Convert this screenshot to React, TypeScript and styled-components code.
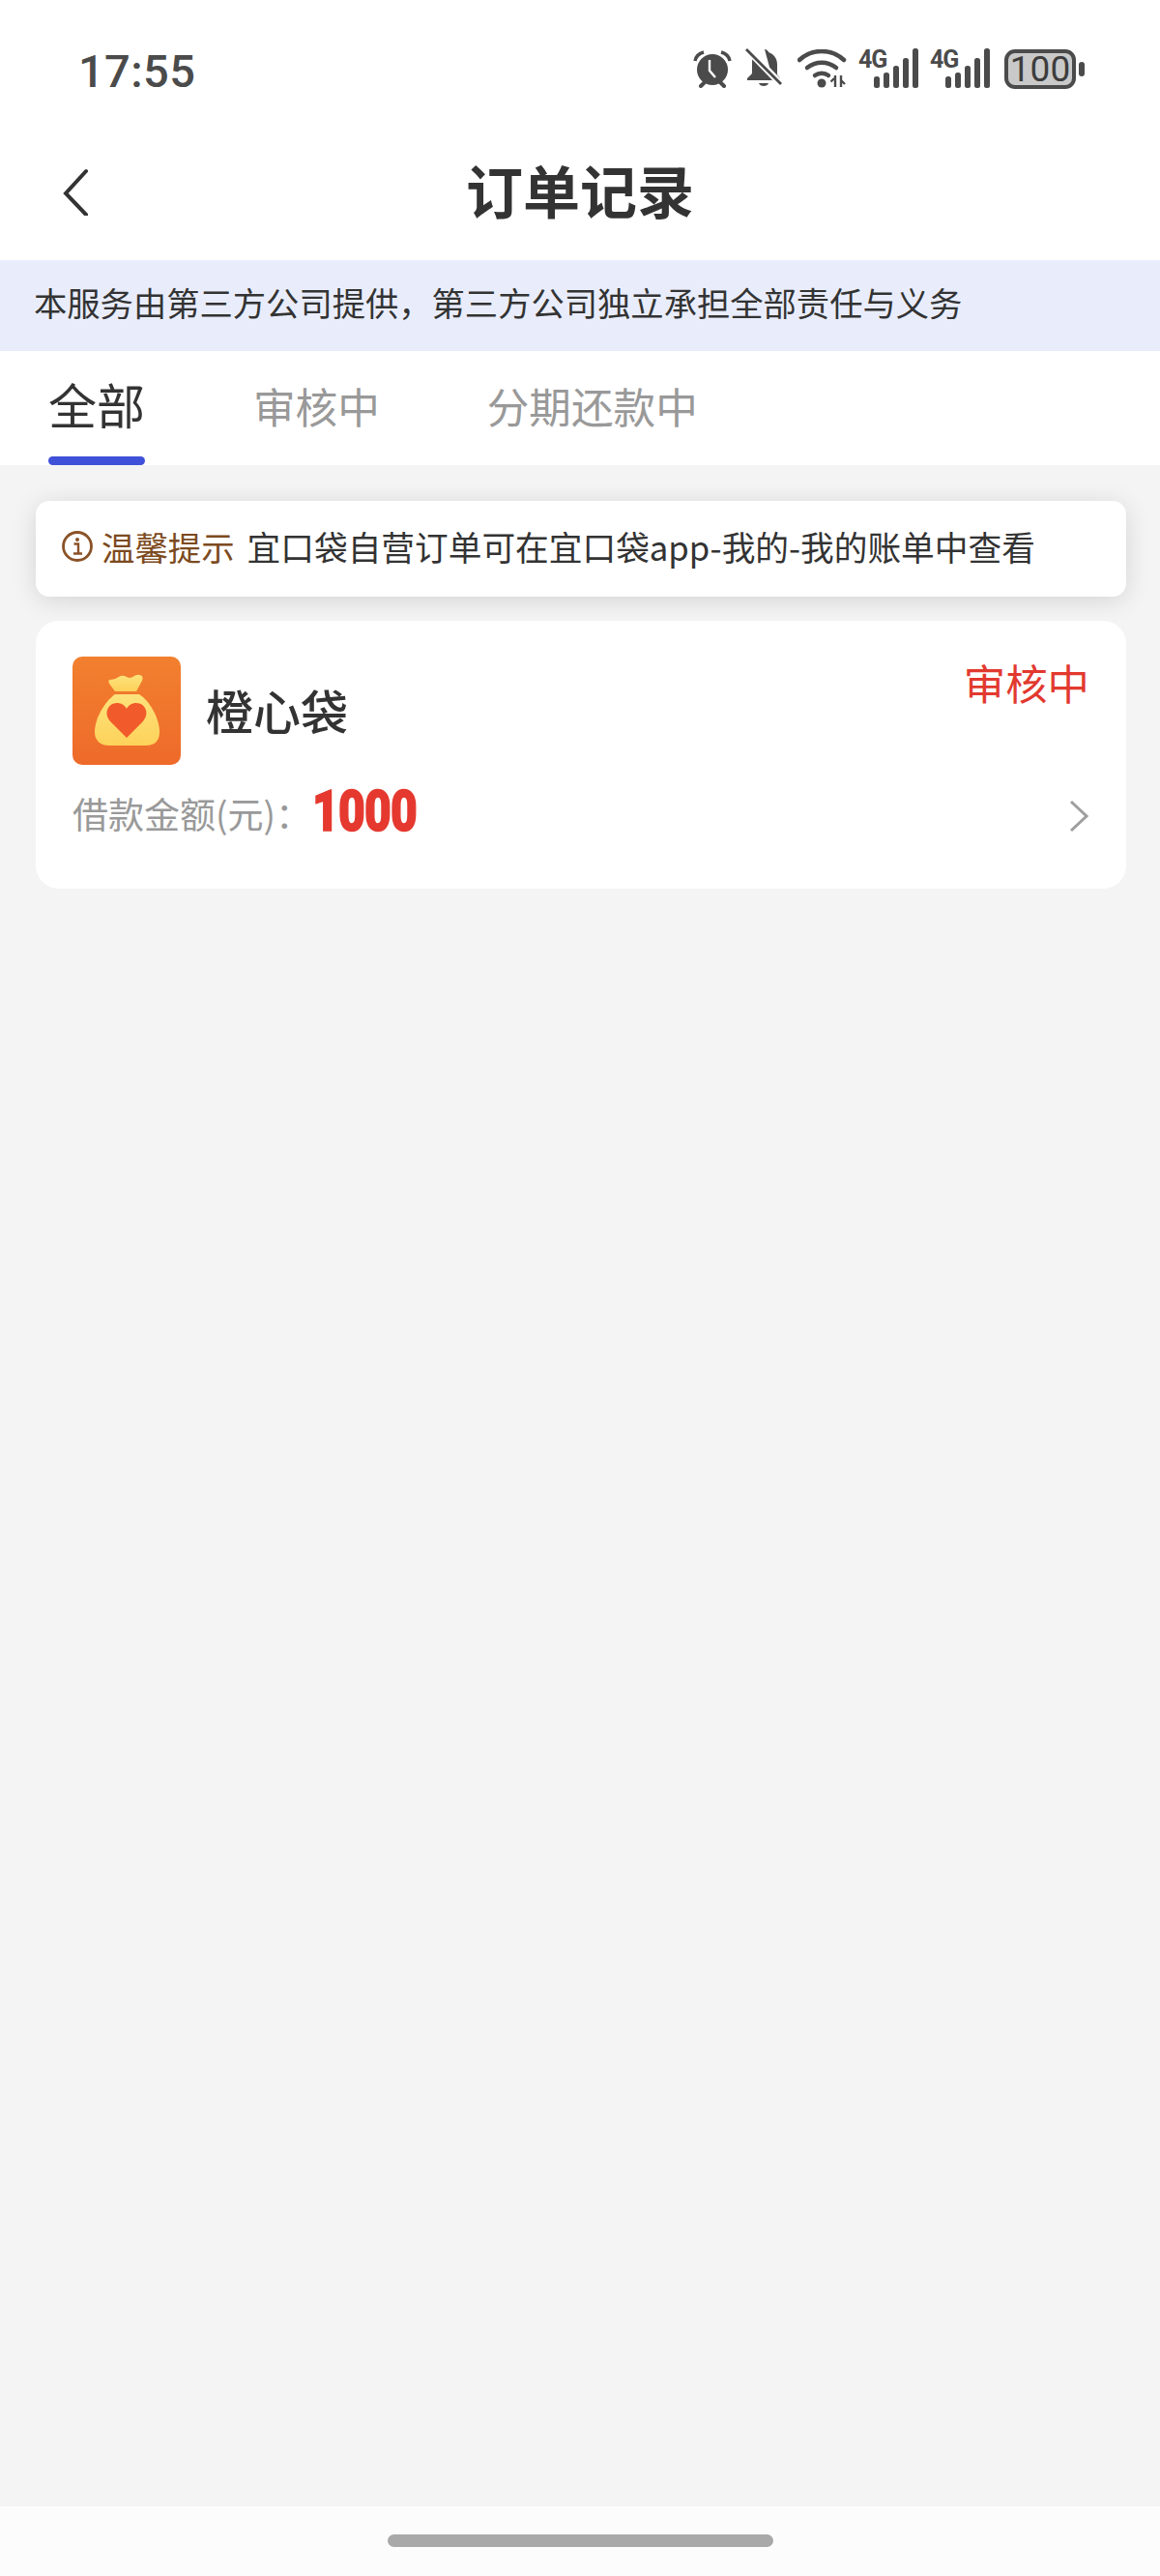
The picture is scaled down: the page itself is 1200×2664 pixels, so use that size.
import React from 'react';
import styled, { createGlobalStyle } from 'styled-components';

const GlobalStyle = createGlobalStyle`
    html, body {
        margin: 0;
        padding: 0;
        background: #f4f4f4;
    }
    * {
        box-sizing: border-box;
    }
`;

const FONT = `"Noto Sans CJK SC", "Noto Sans", sans-serif`;

const Page = styled.div`
    width: 1200px;
    height: 2664px;
    display: flex;
    flex-direction: column;
    background: #f4f4f4;
    font-family: ${FONT};
    overflow: hidden;
`;

const StatusBar = styled.div`
    height: 134px;
    flex: none;
    display: flex;
    align-items: flex-start;
    justify-content: space-between;
    padding: 50px 87px 0 81px;
    background: #fff;
`;

const Clock = styled.span`
    font-family: Roboto, sans-serif;
    font-size: 47px;
    line-height: 47px;
    font-weight: 500;
    letter-spacing: 0.4px;
    color: #4b4b4b;
`;

const StatusIcons = styled.div`
    display: flex;
    align-items: center;
`;

const NavBar = styled.div`
    height: 135px;
    flex: none;
    position: relative;
    display: flex;
    align-items: center;
    justify-content: center;
    padding-bottom: 12px;
    background: #fff;
`;

const BackButton = styled.svg`
    position: absolute;
    left: 62px;
    top: 39px;
`;

const Title = styled.h1`
    margin: 0;
    font-size: 59px;
    line-height: 64px;
    font-weight: 700;
    color: #333;
`;

const Notice = styled.div`
    height: 94px;
    flex: none;
    display: flex;
    align-items: center;
    padding: 0 0 8px 35px;
    background: #e9edfb;
    font-size: 34.3px;
    color: #333;
`;

const Tabs = styled.div`
    height: 118px;
    flex: none;
    display: flex;
    background: #fff;
    padding-left: 50px;
`;

const Tab = styled.div<{ $active?: boolean; $gap: number }>`
    position: relative;
    margin-right: ${({ $gap }) => $gap}px;
    padding-top: ${({ $active }) => ($active ? 25 : 27)}px;
    font-size: ${({ $active }) => ($active ? 50 : 43.6)}px;
    line-height: 58px;
    color: ${({ $active }) => ($active ? '#333' : '#999')};

    ${({ $active }) =>
        $active &&
        `&::after {
            content: '';
            position: absolute;
            left: 0;
            right: 0;
            bottom: 0;
            height: 9px;
            border-radius: 5px;
            background: #3f51d8;
        }`}
`;

const Content = styled.div`
    flex: 1;
    display: flex;
    flex-direction: column;
    gap: 25px;
    padding: 37px 35px 0 37px;
`;

const TipCard = styled.div`
    height: 99px;
    display: flex;
    align-items: center;
    padding: 0 0 6px 26px;
    background: #fff;
    border-radius: 14px;
    box-shadow: 0 4px 26px rgba(0, 0, 0, 0.13);
`;

const TipLabel = styled.span`
    margin-left: 8px;
    font-size: 34.4px;
    color: #7c4a20;
`;

const TipText = styled.span`
    margin-left: 13px;
    font-size: 34.7px;
    color: #333;
`;

const OrderCard = styled.div`
    height: 277px;
    position: relative;
    padding: 37px 38px 0;
    background: #fff;
    border-radius: 24px;
`;

const OrderHead = styled.div`
    display: flex;
    align-items: center;
    gap: 26px;
`;

const AppName = styled.span`
    font-size: 49px;
    line-height: 60px;
    font-weight: 500;
    color: #333;
    margin-top: -2px;
`;

const OrderStatus = styled.span`
    position: absolute;
    top: 36px;
    right: 38px;
    font-size: 43.4px;
    line-height: 54px;
    color: #e2392f;
`;

const AmountRow = styled.div`
    display: flex;
    align-items: center;
    margin-top: 19px;
    height: 62px;
`;

const AmountLabel = styled.span`
    font-size: 37px;
    color: #999;
`;

const AmountValue = styled.span`
    display: inline-block;
    margin-left: 1px;
    margin-top: -4px;
    font-family: Roboto, sans-serif;
    font-size: 60px;
    line-height: 62px;
    font-weight: 900;
    letter-spacing: -1px;
    color: #e5392f;
    -webkit-text-stroke: 1.5px #e5392f;
    transform: scaleX(0.8);
    transform-origin: left center;
`;

const Chevron = styled.svg`
    position: absolute;
    right: 37px;
    top: 184px;
`;

const HomeBar = styled.div`
    height: 72px;
    flex: none;
    display: flex;
    justify-content: center;
    padding-top: 29px;
    background: #fcfcfc;
`;

const HomeHandle = styled.div`
    width: 399px;
    height: 13px;
    border-radius: 7px;
    background: #a9a9a9;
`;

const Battery = styled.div`
    position: relative;
    width: 74px;
    height: 41px;
    margin-left: 15px;
    display: flex;
    align-items: center;
    justify-content: center;
    border: 4px solid #4b4b4b;
    border-radius: 11px;
    background: #c9c9c9;
    font-family: Roboto, sans-serif;
    font-size: 37px;
    line-height: 33px;
    color: #3c3c3c;

    &::after {
        content: '';
        position: absolute;
        right: -13px;
        top: 9px;
        width: 6px;
        height: 15px;
        border-radius: 3px;
        background: #4b4b4b;
    }
`;

const AlarmIcon = () => (
    <svg width="42" height="40" viewBox="0 0 40 40">
        <circle cx="20" cy="21" r="16" fill="#4b4b4b" />
        <path d="M17 11v11l6 7" stroke="#fff" strokeWidth="2.4" fill="none" />
        <path d="M2 12 C3 7 7 4 11 3" stroke="#4b4b4b" strokeWidth="3.5" fill="none" />
        <path d="M38 12 C37 7 33 4 29 3" stroke="#4b4b4b" strokeWidth="3.5" fill="none" />
        <path d="M8 38l4-4M32 38l-4-4" stroke="#4b4b4b" strokeWidth="4" strokeLinecap="round" />
    </svg>
);

const BellOffIcon = () => (
    <svg width="40" height="42" viewBox="0 0 40 42" style={{ marginLeft: 12 }}>
        <path
            d="M21 1c2 0 4 2 4 3 6 2 9 7 9 13v10l3 4v2H3v-2l5-5V14c0-2 .5-4 1.5-5.500L30 34z"
            fill="#4b4b4b"
        />
        <path d="M15 36h10c-1 4-9 4-10 0z" fill="#4b4b4b" />
        <path d="M3 1l35 36" stroke="#fff" strokeWidth="7" />
        <path d="M2 1l36 36" stroke="#4b4b4b" strokeWidth="2.8" />
    </svg>
);

const WifiIcon = () => (
    <svg width="52" height="40" viewBox="0 0 52 40" style={{ marginLeft: 15 }}>
        <path d="M2 11C15-1 35-1 48 11" stroke="#4b4b4b" strokeWidth="4.500" fill="none" strokeLinecap="round" />
        <path d="M10 19c9-7 21-7 30 0" stroke="#4b4b4b" strokeWidth="4.500" fill="none" strokeLinecap="round" />
        <path d="M18 27c4-3 10-3 14 0" stroke="#4b4b4b" strokeWidth="4.500" fill="none" strokeLinecap="round" />
        <circle cx="25" cy="35" r="4.500" fill="#4b4b4b" />
        <path d="M38 30l-3.500 3.500M39 27v12" stroke="#4b4b4b" strokeWidth="2.400" fill="none" />
        <path d="M49 36l-3.500-3.500M45 39V27" stroke="#4b4b4b" strokeWidth="2.400" fill="none" />
    </svg>
);

const SignalWrap = styled.div<{ $gap: number }>`
    position: relative;
    width: 62px;
    height: 42px;
    margin-left: ${({ $gap }) => $gap}px;
    display: flex;
    justify-content: flex-end;

    svg {
        overflow: visible;
        margin-right: 3px;
    }
`;

const NetLabel = styled.span`
    position: absolute;
    left: 0;
    top: 0;
    font-family: Roboto, sans-serif;
    font-size: 25px;
    line-height: 24px;
    font-weight: 700;
    letter-spacing: -1px;
    color: #4b4b4b;
`;

const SignalIcon = ({ gap }: { gap: number }) => (
    <SignalWrap $gap={gap}>
        <NetLabel>4G</NetLabel>
        <svg width="48" height="42" viewBox="0 0 48 42">
            <rect x="5" y="29" width="6" height="12" rx="2.500" fill="#4b4b4b" />
            <rect x="15" y="25" width="6" height="16" rx="2.500" fill="#4b4b4b" />
            <rect x="25" y="18" width="6" height="23" rx="2.500" fill="#4b4b4b" />
            <rect x="35" y="10" width="6" height="31" rx="2.500" fill="#4b4b4b" />
            <rect x="45" y="0" width="6" height="41" rx="2.500" fill="#4b4b4b" />
        </svg>
    </SignalWrap>
);

const InfoIcon = () => (
    <svg width="34" height="34" viewBox="0 0 34 34">
        <circle cx="17" cy="17" r="14.500" stroke="#8a5227" strokeWidth="2.800" fill="none" />
        <circle cx="17" cy="10" r="2" fill="#8a5227" />
        <path d="M13.500 14.500H18V24M13 24.500h9" stroke="#8a5227" strokeWidth="2.400" fill="none" />
    </svg>
);

const BagLogo = () => (
    <svg width="112" height="112" viewBox="0 0 112 112">
        <defs>
            <linearGradient id="bagBg" x1="0" y1="0" x2="0" y2="1">
                <stop offset="0" stopColor="#f2802f" />
                <stop offset="1" stopColor="#ee6a2a" />
            </linearGradient>
            <linearGradient id="bagBody" x1="0" y1="0" x2="0" y2="1">
                <stop offset="0" stopColor="#fde27c" />
                <stop offset="1" stopColor="#fdd25a" />
            </linearGradient>
        </defs>
        <rect width="112" height="112" rx="10" fill="url(#bagBg)" />
        <path
            d="M39 24c5 0 8-3 11-4 4-1 6 2 9 2 4 0 6-4 10-3 4 0 4 4 3 6l-6 11H44l-6-8c-1-2-1-4 1-4z"
            fill="url(#bagBody)"
        />
        <path
            d="M44 39h25c11 7 21 25 21 39 0 10-6 14-14 14H38c-9 0-15-5-15-14 0-14 10-31 21-39z"
            fill="url(#bagBody)"
        />
        <path
            d="M56 84L40 68c-9-9-3-20 6-20 4 0 8 2 10 6 2-4 6-6 10-6 9 0 15 11 6 20z"
            fill="#f15a2a"
        />
    </svg>
);

const App: React.FC = () => {
    return (
        <Page>
            <GlobalStyle />
            <StatusBar>
                <Clock>17:55</Clock>
                <StatusIcons>
                    <AlarmIcon />
                    <BellOffIcon />
                    <WifiIcon />
                    <SignalIcon gap={11} />
                    <SignalIcon gap={12} />
                    <Battery>100</Battery>
                </StatusIcons>
            </StatusBar>
            <NavBar>
                <BackButton width="32" height="50" viewBox="0 0 32 50">
                    <path d="M27 4L6 27l21 22" stroke="#333" strokeWidth="4" fill="none" strokeLinecap="round" />
                </BackButton>
                <Title>订单记录</Title>
            </NavBar>
            <Notice>本服务由第三方公司提供，第三方公司独立承担全部责任与义务</Notice>
            <Tabs>
                <Tab $active $gap={112}>全部</Tab>
                <Tab $gap={111}>审核中</Tab>
                <Tab $gap={0}>分期还款中</Tab>
            </Tabs>
            <Content>
                <TipCard>
                    <InfoIcon />
                    <TipLabel>温馨提示</TipLabel>
                    <TipText>宜口袋自营订单可在宜口袋app-我的-我的账单中查看</TipText>
                </TipCard>
                <OrderCard>
                    <OrderHead>
                        <BagLogo />
                        <AppName>橙心袋</AppName>
                    </OrderHead>
                    <OrderStatus>审核中</OrderStatus>
                    <AmountRow>
                        <AmountLabel>借款金额(元)：</AmountLabel>
                        <AmountValue>1000</AmountValue>
                    </AmountRow>
                    <Chevron width="24" height="36" viewBox="0 0 24 36">
                        <path d="M4 3l16 15L4 33" stroke="#9e9e9e" strokeWidth="3" fill="none" />
                    </Chevron>
                </OrderCard>
            </Content>
            <HomeBar>
                <HomeHandle />
            </HomeBar>
        </Page>
    );
};

export default App;
